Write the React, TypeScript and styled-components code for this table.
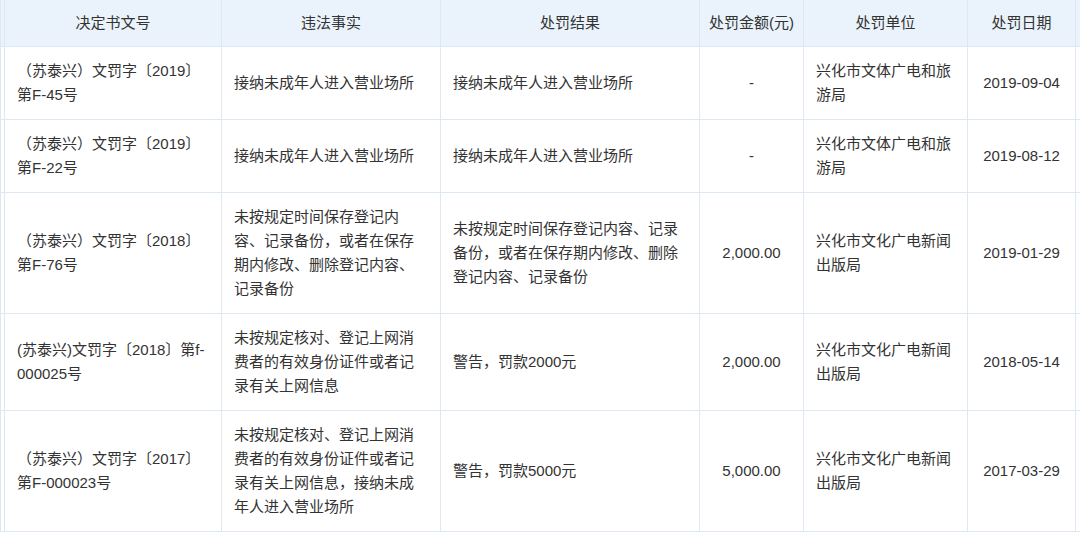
import React from 'react';
import styled, { createGlobalStyle } from 'styled-components';

const GlobalStyle = createGlobalStyle`
    html, body {
        margin: 0;
        padding: 0;
        background: #ffffff;
    }
    body {
        font-family: "Liberation Sans", "Noto Sans CJK SC", sans-serif;
        color: #333;
    }
`;

type Align = 'left' | 'center';

interface Column {
    key: string;
    title: string;
    width: number;
    align: Align;
}

const columns: Column[] = [
    { key: 'docNo', title: '决定书文号', width: 217, align: 'left' },
    { key: 'fact', title: '违法事实', width: 219, align: 'left' },
    { key: 'result', title: '处罚结果', width: 259, align: 'left' },
    { key: 'amount', title: '处罚金额(元)', width: 104, align: 'center' },
    { key: 'unit', title: '处罚单位', width: 164, align: 'left' },
    { key: 'date', title: '处罚日期', width: 108, align: 'center' },
];

// lines are kept as in the source page so the wraps land in the same place
const rows: Record<string, string>[] = [
    {
        docNo: '（苏泰兴）文罚字〔2019〕\n第F-45号',
        fact: '接纳未成年人进入营业场所',
        result: '接纳未成年人进入营业场所',
        amount: '-',
        unit: '兴化市文体广电和旅\n游局',
        date: '2019-09-04',
    },
    {
        docNo: '（苏泰兴）文罚字〔2019〕\n第F-22号',
        fact: '接纳未成年人进入营业场所',
        result: '接纳未成年人进入营业场所',
        amount: '-',
        unit: '兴化市文体广电和旅\n游局',
        date: '2019-08-12',
    },
    {
        docNo: '（苏泰兴）文罚字〔2018〕\n第F-76号',
        fact: '未按规定时间保存登记内\n容、记录备份，或者在保存\n期内修改、删除登记内容、\n记录备份',
        result: '未按规定时间保存登记内容、记录\n备份，或者在保存期内修改、删除\n登记内容、记录备份',
        amount: '2,000.00',
        unit: '兴化市文化广电新闻\n出版局',
        date: '2019-01-29',
    },
    {
        docNo: '(苏泰兴)文罚字〔2018〕第f-\n000025号',
        fact: '未按规定核对、登记上网消\n费者的有效身份证件或者记\n录有关上网信息',
        result: '警告，罚款2000元',
        amount: '2,000.00',
        unit: '兴化市文化广电新闻\n出版局',
        date: '2018-05-14',
    },
    {
        docNo: '（苏泰兴）文罚字〔2017〕\n第F-000023号',
        fact: '未按规定核对、登记上网消\n费者的有效身份证件或者记\n录有关上网信息，接纳未成\n年人进入营业场所',
        result: '警告，罚款5000元',
        amount: '5,000.00',
        unit: '兴化市文化广电新闻\n出版局',
        date: '2017-03-29',
    },
];

export default function App() {
    return (
        <>
            <GlobalStyle />
            <Viewport>
                <Table>
                    <colgroup>
                        <col style={{ width: 4 }} />
                        {columns.map(c => <col key={c.key} style={{ width: c.width }} />)}
                        <col style={{ width: 40 }} />
                    </colgroup>
                    <thead>
                        <tr>
                            <HeadCell />
                            {columns.map(c => <HeadCell key={c.key}>{c.title}</HeadCell>)}
                            <HeadCell />
                        </tr>
                    </thead>
                    <tbody>
                        {rows.map((row, i) => (
                            <tr key={i}>
                                <Cell $align="left" />
                                {columns.map(c => (
                                    <Cell key={c.key} $align={c.align}>{row[c.key]}</Cell>
                                ))}
                                <Cell $align="left" />
                            </tr>
                        ))}
                    </tbody>
                </Table>
            </Viewport>
        </>
    );
}

const Viewport = styled.div`
    width: 1080px;
    height: 536px;
    overflow: hidden;
    background: #fff;
`;

const Table = styled.table`
    width: 1115px;
    table-layout: fixed;
    border-collapse: collapse;
    border-spacing: 0;
    font-size: 15px;
    line-height: 24px;
    color: #333;
`;

const HeadCell = styled.th`
    height: 46px;
    padding: 0 8px;
    background: #eaf3fb;
    border: 1px solid #dde8f3;
    border-top: none;
    font-weight: 400;
    text-align: center;
    vertical-align: middle;
    white-space: nowrap;
    overflow: hidden;
`;

const Cell = styled.td<{ $align: Align }>`
    padding: 12px 12px;
    border: 1px solid #dde8f3;
    text-align: ${props => props.$align};
    vertical-align: middle;
    white-space: pre-line;
    overflow: hidden;
`;
